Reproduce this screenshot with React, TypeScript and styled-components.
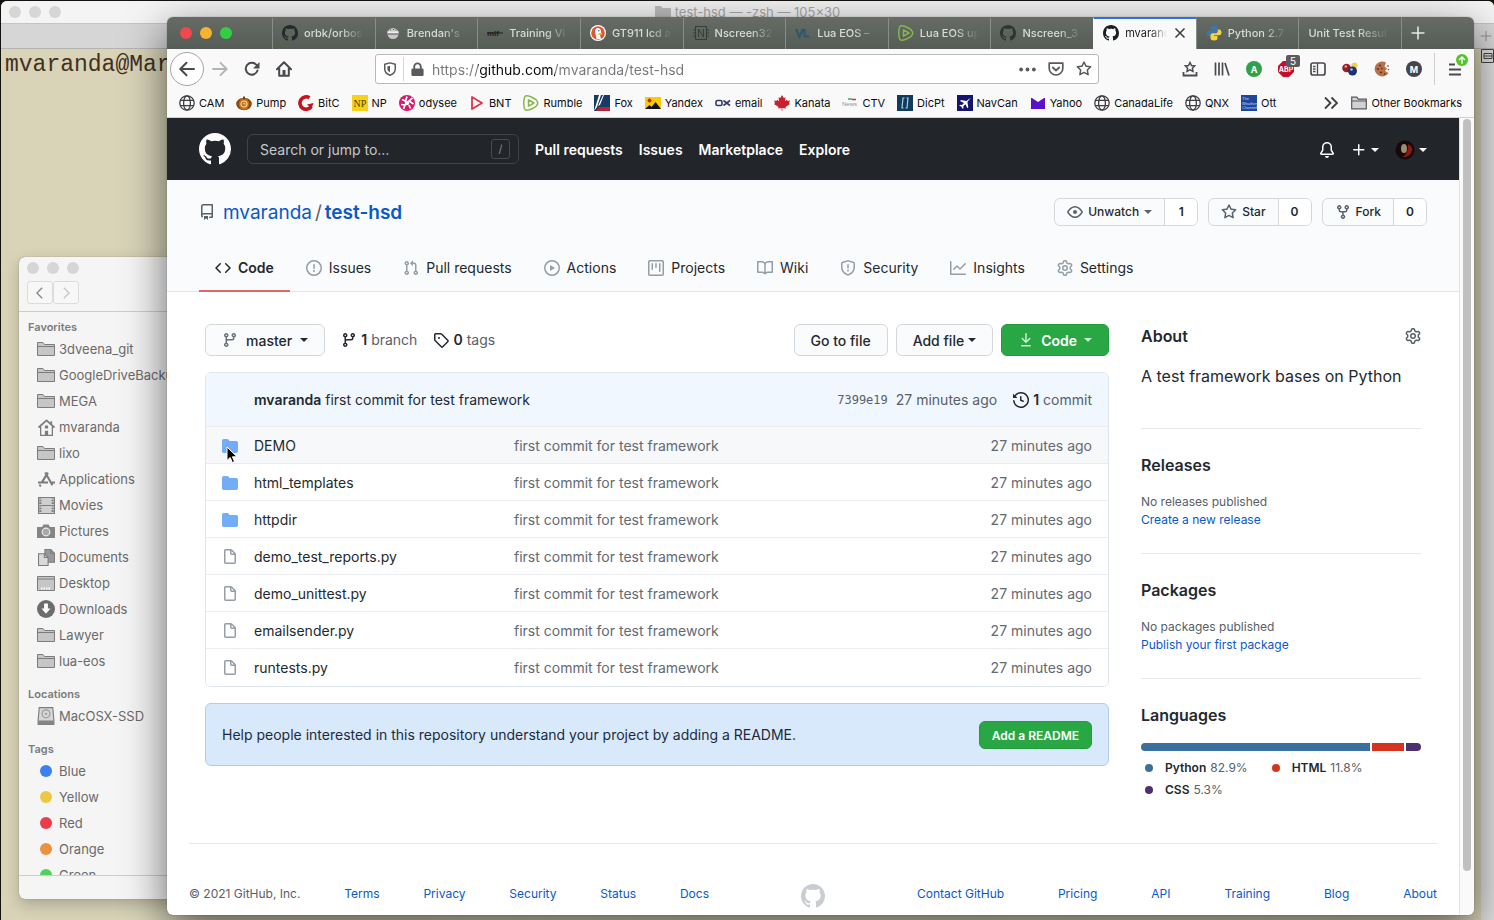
import React from "react";
import styled, { createGlobalStyle, css } from "styled-components";

const GlobalStyle = createGlobalStyle`
  *, *::before, *::after { box-sizing: border-box; }
  body {
    margin: 0;
    background: #14120e;
    font-family: Inter, "Liberation Sans", sans-serif;
    font-size: 14px;
    line-height: 20px;
    color: #24292e;
  }
  button, input { font-family: inherit; }
  button { cursor: pointer; }
  a { color: inherit; text-decoration: none; }
  h1, h2, p, ul { margin: 0; padding: 0; }
  ul { list-style: none; }
  svg { display: block; flex: none; }
`;

/* ---------- icon paths (16px grid) ---------- */

const paths = {
  mark: "M8 0C3.58 0 0 3.58 0 8c0 3.54 2.29 6.53 5.47 7.59.4.07.55-.17.55-.38 0-.19-.01-.82-.01-1.49-2.01.37-2.53-.49-2.69-.94-.09-.23-.48-.94-.82-1.13-.28-.15-.68-.52-.01-.53.63-.01 1.08.58 1.23.82.72 1.21 1.87.87 2.33.66.07-.52.28-.87.51-1.07-1.78-.2-3.64-.89-3.64-3.95 0-.87.31-1.59.82-2.15-.08-.2-.36-1.02.08-2.12 0 0 .67-.21 2.2.82.64-.18 1.32-.27 2-.27.68 0 1.36.09 2 .27 1.53-1.04 2.2-.82 2.2-.82.44 1.1.16 1.92.08 2.12.51.56.82 1.27.82 2.15 0 3.07-1.87 3.75-3.65 3.95.29.25.54.73.54 1.48 0 1.07-.01 1.93-.01 2.2 0 .21.15.46.55.38A8.013 8.013 0 0016 8c0-4.42-3.58-8-8-8z",
  repo: "M2 2.5A2.5 2.5 0 014.5 0h8.75a.75.75 0 01.75.75v12.5a.75.75 0 01-.75.75h-2.5a.75.75 0 110-1.5h1.75v-2h-8a1 1 0 00-.714 1.7.75.75 0 01-1.072 1.05A2.495 2.495 0 012 11.5v-9zm10.5-1V9h-8c-.356 0-.694.074-1 .208V2.5a1 1 0 011-1h8zM5 12.25v3.25a.25.25 0 00.4.2l1.45-1.087a.25.25 0 01.3 0L8.6 15.7a.25.25 0 00.4-.2v-3.25a.25.25 0 00-.25-.25h-3.5a.25.25 0 00-.25.25z",
  code: "M4.72 3.22a.75.75 0 011.06 1.06L2.06 8l3.72 3.72a.75.75 0 11-1.06 1.06L.47 8.53a.75.75 0 010-1.06l4.25-4.25zm6.56 0a.75.75 0 10-1.06 1.06L13.94 8l-3.72 3.72a.75.75 0 101.06 1.06l4.25-4.25a.75.75 0 000-1.06l-4.25-4.25z",
  issue: "M8 1.5a6.5 6.5 0 100 13 6.5 6.5 0 000-13zM0 8a8 8 0 1116 0A8 8 0 010 8zm9 3a1 1 0 11-2 0 1 1 0 012 0zm-.25-6.25a.75.75 0 00-1.5 0v3.5a.75.75 0 001.5 0v-3.5z",
  pull: "M7.177 3.073L9.573.677A.25.25 0 0110 .854v4.792a.25.25 0 01-.427.177L7.177 3.427a.25.25 0 010-.354zM3.75 2.5a.75.75 0 100 1.5.75.75 0 000-1.5zm-2.25.75a2.25 2.25 0 113 2.122v5.256a2.251 2.251 0 11-1.5 0V5.372A2.25 2.25 0 011.5 3.25zM11 2.5h-1V4h1a1 1 0 011 1v5.628a2.251 2.251 0 101.5 0V5A2.5 2.5 0 0011 2.5zm1 10.25a.75.75 0 111.5 0 .75.75 0 01-1.5 0zM3.75 12a.75.75 0 100 1.5.75.75 0 000-1.5z",
  play: "M1.5 8a6.5 6.5 0 1113 0 6.5 6.5 0 01-13 0zM8 0a8 8 0 100 16A8 8 0 008 0zM6.379 5.227A.25.25 0 006 5.442v5.117a.25.25 0 00.379.214l4.264-2.559a.25.25 0 000-.428L6.379 5.227z",
  project: "M1.75 0A1.75 1.75 0 000 1.75v12.5C0 15.216.784 16 1.75 16h12.5A1.75 1.75 0 0016 14.25V1.75A1.75 1.75 0 0014.25 0H1.75zM1.5 1.75a.25.25 0 01.25-.25h12.5a.25.25 0 01.25.25v12.5a.25.25 0 01-.25.25H1.75a.25.25 0 01-.25-.25V1.75zM11.75 3a.75.75 0 00-.75.75v7.5a.75.75 0 001.5 0v-7.5a.75.75 0 00-.75-.75zm-8.25.75a.75.75 0 011.5 0v5.5a.75.75 0 01-1.5 0v-5.5zM8 3a.75.75 0 00-.75.75v3.5a.75.75 0 001.5 0v-3.5A.75.75 0 008 3z",
  book: "M0 1.75A.75.75 0 01.75 1h4.253c1.227 0 2.317.59 3 1.501A3.744 3.744 0 0111.006 1h4.245a.75.75 0 01.75.75v10.5a.75.75 0 01-.75.75h-4.507a2.25 2.25 0 00-1.591.659l-.622.621a.75.75 0 01-1.06 0l-.622-.621A2.25 2.25 0 005.258 13H.75a.75.75 0 01-.75-.75V1.75zm8.755 3a2.25 2.25 0 012.25-2.25H14.5v9h-3.757c-.71 0-1.4.201-1.992.572l.004-7.322zm-1.504 7.324l.004-5.073-.002-2.253A2.25 2.25 0 005.003 2.5H1.5v9h3.757a3.75 3.75 0 011.994.574z",
  shield: "M7.467.133a1.75 1.75 0 011.066 0l5.25 1.68A1.75 1.75 0 0115 3.48V7c0 1.566-.32 3.182-1.303 4.682-.983 1.498-2.585 2.813-5.032 3.855a1.7 1.7 0 01-1.33 0c-2.447-1.042-4.049-2.357-5.032-3.855C1.32 10.182 1 8.566 1 7V3.48a1.75 1.75 0 011.217-1.667l5.25-1.68zm.61 1.429a.25.25 0 00-.153 0l-5.25 1.68a.25.25 0 00-.174.238V7c0 1.358.275 2.666 1.057 3.86.784 1.194 2.121 2.34 4.366 3.297a.2.2 0 00.154 0c2.245-.956 3.582-2.104 4.366-3.298C13.225 9.666 13.5 8.36 13.5 7V3.48a.25.25 0 00-.174-.237l-5.25-1.68zM9 10.5a1 1 0 11-2 0 1 1 0 012 0zm-.25-5.75a.75.75 0 10-1.5 0v3a.75.75 0 001.5 0v-3z",
  graph: "M1.5 1.75a.75.75 0 00-1.5 0v12.5c0 .414.336.75.75.75h14.5a.75.75 0 000-1.5H1.5V1.75zm14.28 2.53a.75.75 0 00-1.06-1.06L10 7.94 7.53 5.47a.75.75 0 00-1.06 0L3.22 8.72a.75.75 0 001.06 1.06L7 7.06l2.47 2.47a.75.75 0 001.06 0l5.25-5.25z",
  gear: "M7.429 1.525a6.593 6.593 0 011.142 0c.036.003.108.036.137.146l.289 1.105c.147.56.55.967.997 1.189.174.086.341.183.501.29.417.278.97.423 1.53.27l1.102-.303c.11-.03.175.016.195.046.219.31.41.641.573.989.014.031.022.11-.059.19l-.815.806c-.411.406-.562.957-.53 1.456a4.588 4.588 0 010 .582c-.032.499.119 1.05.53 1.456l.815.806c.08.08.073.159.059.19a6.494 6.494 0 01-.573.99c-.02.029-.086.074-.195.045l-1.103-.303c-.559-.153-1.112-.008-1.529.27-.16.107-.327.204-.5.29-.449.222-.851.628-.998 1.189l-.289 1.105c-.029.11-.101.143-.137.146a6.613 6.613 0 01-1.142 0c-.036-.003-.108-.037-.137-.146l-.289-1.105c-.147-.56-.55-.967-.997-1.189a4.502 4.502 0 01-.501-.29c-.417-.278-.97-.423-1.53-.27l-1.102.303c-.11.03-.175-.016-.195-.046a6.492 6.492 0 01-.573-.989c-.014-.031-.022-.11.059-.19l.815-.806c.411-.406.562-.957.53-1.456a4.587 4.587 0 010-.582c.032-.499-.119-1.05-.53-1.456l-.815-.806c-.08-.08-.073-.159-.059-.19a6.44 6.44 0 01.573-.99c.02-.029.086-.075.195-.045l1.103.303c.559.153 1.112.008 1.529-.27.16-.107.327-.204.5-.29.449-.222.851-.628.998-1.189l.289-1.105c.029-.11.101-.143.137-.146zM8 0c-.236 0-.47.01-.701.03-.743.065-1.29.615-1.458 1.261l-.29 1.106c-.017.066-.078.158-.211.224a5.994 5.994 0 00-.668.386c-.123.082-.233.09-.3.071L3.27 2.776c-.644-.177-1.392.02-1.82.63a7.977 7.977 0 00-.704 1.217c-.315.675-.111 1.422.363 1.891l.815.806c.05.048.098.147.088.294a6.084 6.084 0 000 .772c.01.147-.038.246-.088.294l-.815.806c-.474.469-.678 1.216-.363 1.891.2.428.436.835.704 1.218.428.609 1.176.806 1.82.63l1.103-.303c.066-.019.176-.011.299.071.213.143.436.272.668.386.133.066.194.158.212.224l.289 1.106c.169.646.715 1.196 1.458 1.26a8.094 8.094 0 001.402 0c.743-.064 1.29-.614 1.458-1.26l.29-1.106c.017-.066.078-.158.211-.224a5.98 5.98 0 00.668-.386c.123-.082.233-.09.3-.071l1.102.302c.644.177 1.392-.02 1.82-.63.268-.382.505-.789.704-1.217.315-.675.111-1.422-.364-1.891l-.814-.806c-.05-.048-.098-.147-.088-.294a6.1 6.1 0 000-.772c-.01-.147.039-.246.088-.294l.814-.806c.475-.469.679-1.216.364-1.891a7.992 7.992 0 00-.704-1.218c-.428-.609-1.176-.806-1.82-.63l-1.103.303c-.066.019-.176.011-.299-.071a5.991 5.991 0 00-.668-.386c-.133-.066-.194-.158-.212-.224L10.16 1.29C9.99.645 9.444.095 8.701.031A8.094 8.094 0 008 0zm1.5 8a1.5 1.5 0 11-3 0 1.5 1.5 0 013 0zM11 8a3 3 0 11-6 0 3 3 0 016 0z",
  eye: "M1.679 7.932c.412-.621 1.242-1.75 2.366-2.717C5.175 4.242 6.527 3.5 8 3.5c1.473 0 2.824.742 3.955 1.715 1.124.967 1.954 2.096 2.366 2.717a.119.119 0 010 .136c-.412.621-1.242 1.75-2.366 2.717C10.825 11.758 9.473 12.5 8 12.5c-1.473 0-2.824-.742-3.955-1.715C2.92 9.818 2.09 8.69 1.679 8.068a.119.119 0 010-.136zM8 2c-1.981 0-3.67.992-4.933 2.078C1.797 5.169.88 6.423.43 7.1a1.619 1.619 0 000 1.798c.45.678 1.367 1.932 2.637 3.024C4.329 13.008 6.019 14 8 14c1.981 0 3.67-.992 4.933-2.078 1.27-1.091 2.187-2.345 2.637-3.023a1.619 1.619 0 000-1.798c-.45-.678-1.367-1.932-2.637-3.023C11.671 2.992 9.981 2 8 2zm0 8a2 2 0 100-4 2 2 0 000 4z",
  star: "M8 .25a.75.75 0 01.673.418l1.882 3.815 4.21.612a.75.75 0 01.416 1.279l-3.046 2.97.719 4.192a.75.75 0 01-1.088.791L8 12.347l-3.766 1.98a.75.75 0 01-1.088-.79l.72-4.194L.818 6.374a.75.75 0 01.416-1.28l4.21-.611L7.327.668A.75.75 0 018 .25zm0 2.445L6.615 5.5a.75.75 0 01-.564.41l-3.097.45 2.24 2.184a.75.75 0 01.216.664l-.528 3.084 2.769-1.456a.75.75 0 01.698 0l2.77 1.456-.53-3.084a.75.75 0 01.216-.664l2.24-2.183-3.096-.45a.75.75 0 01-.564-.41L8 2.694v.001z",
  fork: "M5 3.25a.75.75 0 11-1.5 0 .75.75 0 011.5 0zm0 2.122a2.25 2.25 0 10-1.5 0v.878A2.25 2.25 0 005.75 8.5h1.5v2.128a2.251 2.251 0 101.5 0V8.5h1.5a2.25 2.25 0 002.25-2.25v-.878a2.25 2.25 0 10-1.5 0v.878a.75.75 0 01-.75.75h-4.5A.75.75 0 015 6.25v-.878zm3.75 7.378a.75.75 0 11-1.5 0 .75.75 0 011.5 0zm3-8.75a.75.75 0 100-1.5.75.75 0 000 1.5z",
  branch: "M11.75 2.5a.75.75 0 100 1.5.75.75 0 000-1.5zm-2.25.75a2.25 2.25 0 113 2.122V6A2.5 2.5 0 0110 8.5H6a1 1 0 00-1 1v1.128a2.251 2.251 0 11-1.5 0V5.372a2.25 2.25 0 111.5 0v1.836A2.492 2.492 0 016 7h4a1 1 0 001-1v-.628A2.25 2.25 0 019.5 3.25zM4.25 12a.75.75 0 100 1.5.75.75 0 000-1.5zM3.5 3.25a.75.75 0 111.5 0 .75.75 0 01-1.5 0z",
  tag: "M2.5 7.775V2.75a.25.25 0 01.25-.25h5.025a.25.25 0 01.177.073l6.25 6.25a.25.25 0 010 .354l-5.025 5.025a.25.25 0 01-.354 0l-6.25-6.25a.25.25 0 01-.073-.177zm-1.5 0V2.75C1 1.784 1.784 1 2.75 1h5.025c.464 0 .91.184 1.238.513l6.25 6.25a1.75 1.75 0 010 2.474l-5.026 5.026a1.75 1.75 0 01-2.474 0l-6.25-6.25A1.75 1.75 0 011 7.775zM6 5a1 1 0 100 2 1 1 0 000-2z",
  history: "M1.643 3.143L.427 1.927A.25.25 0 000 2.104V5.75c0 .138.112.25.25.25h3.646a.25.25 0 00.177-.427L2.715 4.215a6.5 6.5 0 11-1.18 4.458.75.75 0 10-1.493.154 8.001 8.001 0 101.6-5.684zM7.75 4a.75.75 0 01.75.75v2.992l2.028.812a.75.75 0 01-.557 1.392l-2.5-1A.75.75 0 017 8.25v-3.5A.75.75 0 017.75 4z",
  download: "M7.47 10.78a.75.75 0 001.06 0l3.75-3.75a.75.75 0 00-1.06-1.06L8.75 8.44V1.75a.75.75 0 00-1.5 0v6.69L4.78 5.97a.75.75 0 00-1.06 1.06l3.75 3.75zM3.75 13a.75.75 0 000 1.5h8.5a.75.75 0 000-1.5h-8.5z",
  directory: "M1.75 1A1.75 1.75 0 000 2.75v10.5C0 14.216.784 15 1.75 15h12.5A1.75 1.75 0 0016 13.25v-8.5A1.75 1.75 0 0014.25 3h-6.5a.25.25 0 01-.2-.1l-.9-1.2c-.33-.44-.85-.7-1.4-.7h-3.5z",
  file: "M3.75 1.5a.25.25 0 00-.25.25v11.5c0 .138.112.25.25.25h8.5a.25.25 0 00.25-.25V6H9.75A1.75 1.75 0 018 4.25V1.5H3.75zm5.75.56v2.19c0 .138.112.25.25.25h2.19L9.5 2.06zM2 1.75C2 .784 2.784 0 3.75 0h5.086c.464 0 .909.184 1.237.513l3.414 3.414c.329.328.513.773.513 1.237v8.086A1.75 1.75 0 0112.25 15h-8.5A1.75 1.75 0 012 13.25V1.75z",
  bell: "M8 16a2 2 0 001.985-1.75c.017-.137-.097-.25-.235-.25h-3.5c-.138 0-.252.113-.235.25A2 2 0 008 16zM8 1.5A3.5 3.5 0 004.5 5v2.947c0 .346-.102.683-.294.97l-1.703 2.556a.018.018 0 00-.003.01l.001.006c0 .002.002.004.004.006a.017.017 0 00.006.004l.007.001h10.964l.007-.001a.016.016 0 00.006-.004.016.016 0 00.004-.006l.001-.007a.017.017 0 00-.003-.01l-1.703-2.554a1.75 1.75 0 01-.294-.97V5A3.5 3.5 0 008 1.5zM3 5a5 5 0 0110 0v2.947c0 .05.015.098.042.139l1.703 2.555A1.518 1.518 0 0113.482 13H2.518a1.518 1.518 0 01-1.263-2.36l1.703-2.554A.25.25 0 003 7.947V5z",
  plus: "M7.75 2a.75.75 0 01.75.75V7h4.25a.75.75 0 110 1.5H8.5v4.25a.75.75 0 11-1.5 0V8.5H2.75a.75.75 0 010-1.5H7V2.75A.75.75 0 017.75 2z",
};

type IconName = keyof typeof paths;

const Icon = ({ name, size = 16, color = "currentColor" }: { name: IconName; size?: number; color?: string }) => (
  <svg width={size} height={size} viewBox="0 0 16 16" fill={color} aria-hidden="true">
    <path fillRule="evenodd" d={paths[name]} />
  </svg>
);

const Svg = ({ size = 16, children }: { size?: number; children: React.ReactNode }) => (
  <svg width={size} height={size} viewBox="0 0 16 16" fill="none" aria-hidden="true">
    {children}
  </svg>
);

/* ---------- desktop and windows ---------- */

const Desktop = styled.div`
  position: relative;
  height: 100vh;
  min-height: 600px;
  overflow: hidden;
`;

const TerminalWindow = styled.section`
  position: absolute;
  inset: 1px 0 0 1px;
  display: flex;
  flex-direction: column;
  overflow: hidden;
  border-radius: 6px 6px 0 0;
  background: #d9d4b8;
`;

const TerminalTitle = styled.header`
  display: flex;
  align-items: center;
  height: 23px;
  padding: 0 60px 0 8px;
  background: #f4f4f4;
  border-bottom: 1px solid #c4c4c4;
`;

const TerminalName = styled.span`
  flex: 1;
  display: flex;
  justify-content: center;
  gap: 4px;
  font-size: 13px;
  color: #a9a9a9;
`;

const Dots = styled.div`
  display: flex;
  gap: 8px;
`;

const Dot = styled.span<{ $color: string }>`
  width: 12px;
  height: 12px;
  border-radius: 50%;
  background: ${(p) => p.$color};
`;

const TerminalTabs = styled.div`
  display: flex;
  align-items: center;
  justify-content: flex-end;
  height: 25px;
  padding-right: 2px;
  color: #8c8c8c;
  background: #d6d6d6;
  border-bottom: 1px solid #b4b4b4;
`;

const TerminalBody = styled.div`
  flex: 1;
  display: flex;
  justify-content: space-between;
`;

const Prompt = styled.pre`
  margin: 0;
  padding: 3px 4px;
  font-family: "Liberation Mono", monospace;
  font-size: 23px;
  line-height: 26px;
  color: #43301f;
`;

const TerminalScroll = styled.div`
  width: 13px;
  background: #e0e0e0;
  color: #444444;
`;

const FinderWindow = styled.section`
  position: absolute;
  left: 19px;
  top: 257px;
  bottom: 21px;
  width: 420px;
  display: flex;
  flex-direction: column;
  overflow: hidden;
  border-radius: 6px;
  background: #f5f5f5;
  box-shadow: 0 0 1px rgba(0, 0, 0, 0.5), 0 6px 16px rgba(0, 0, 0, 0.22);
`;

const FinderBar = styled.header`
  display: flex;
  flex-direction: column;
  gap: 7px;
  height: 55px;
  padding: 5px 8px;
  border-bottom: 1px solid #cdcdcd;
`;

const FinderNav = styled.div`
  display: flex;
`;

const FinderNavButton = styled.button<{ $dim?: boolean }>`
  display: grid;
  place-items: center;
  width: 26px;
  height: 23px;
  padding: 0;
  border: 1px solid #dcdcdc;
  border-radius: 3px;
  background: #f7f7f7;
  color: ${(p) => (p.$dim ? "#c6c6c6" : "#8a8a8a")};
`;

const FinderSidebar = styled.nav`
  flex: 1;
  min-height: 0;
  overflow: hidden;
  display: flex;
  flex-direction: column;
  gap: 11px;
  padding: 6px 9px 0;
`;

const FinderHeading = styled.h2`
  font-size: 11px;
  line-height: 18px;
  font-weight: 600;
  color: #7b7b7b;
`;

const FinderItem = styled.li`
  display: flex;
  align-items: center;
  gap: 4px;
  height: 26px;
  padding-left: 9px;
  font-size: 13px;
  color: #6a6a6a;
  white-space: nowrap;
`;

const FinderIcon = styled.span`
  display: grid;
  place-items: center;
  width: 18px;
  color: #7c7c7c;
`;

const FinderStatus = styled.footer`
  height: 24px;
  border-top: 1px solid #cdcdcd;
`;

const BrowserWindow = styled.section`
  position: absolute;
  inset: 17px 20px 5px 167px;
  display: flex;
  flex-direction: column;
  overflow: hidden;
  border-radius: 6px;
  background: #ffffff;
  box-shadow: 0 0 1px rgba(0, 0, 0, 0.6), 0 14px 44px rgba(0, 0, 0, 0.6);
`;

/* ---------- browser chrome ---------- */

const TabStrip = styled.header`
  display: flex;
  height: 32px;
  background: linear-gradient(#666b66, #555b55);
`;

const WindowControls = styled.div`
  display: flex;
  align-items: center;
  gap: 8px;
  width: 105px;
  padding-left: 13px;
`;

const Tab = styled.button<{ $active?: boolean }>`
  flex: 1;
  min-width: 0;
  display: flex;
  align-items: center;
  gap: 6px;
  padding: 0 10px 2px 9px;
  border: 0;
  border-left: 1px solid #8a8e8a;
  border-top: 2px solid transparent;
  background: none;
  color: #d9dbd9;
  font-size: 11px;
  font-weight: 500;
  ${(p) =>
    p.$active &&
    css`
      background: #f9f9fa;
      border-color: #2f6fe0 transparent transparent;
      color: #1c1c1d;
      font-weight: 400;
    `}
`;

const TabTitle = styled.span`
  flex: 1;
  min-width: 0;
  overflow: hidden;
  white-space: nowrap;
  text-align: left;
  mask-image: linear-gradient(to right, #000 60%, transparent 98%);
`;

const NewTab = styled.button`
  width: 73px;
  padding: 0 0 0 8px;
  border: 0;
  border-left: 1px solid #8a8e8a;
  background: none;
  color: #e6e8e6;
`;

const Toolbar = styled.div`
  display: flex;
  align-items: center;
  height: 40px;
  padding: 0 3px;
  background: #f9f9fa;
  color: #4a4a4f;
`;

const ToolButton = styled.button<{ $round?: boolean }>`
  position: relative;
  display: grid;
  place-items: center;
  width: 32px;
  height: 32px;
  padding: 0;
  border: 0;
  background: none;
  color: inherit;
  ${(p) =>
    p.$round &&
    css`
      width: 34px;
      height: 34px;
      border: 1px solid #a5a5a8;
      border-radius: 50%;
      background: #ffffff;
    `}
`;

const Badge = styled.span`
  position: absolute;
  top: 2px;
  right: 2px;
  padding: 0 4px;
  border-radius: 2px;
  background: #5b5b5f;
  color: #ffffff;
  font-size: 10px;
  line-height: 12px;
`;

const UpdateBadge = styled.span`
  position: absolute;
  top: 1px;
  right: 3px;
`;

const AddressBar = styled.div`
  flex: 1;
  display: flex;
  align-items: center;
  height: 30px;
  margin: 0 75px;
  border: 1px solid #b8b8bb;
  border-radius: 3px;
  background: #ffffff;
`;

const AddressSlot = styled.button<{ $divided?: boolean }>`
  display: grid;
  place-items: center;
  width: 28px;
  height: 24px;
  padding: 0;
  border: 0;
  border-right: 1px solid ${(p) => (p.$divided ? "#d7d7db" : "transparent")};
  background: none;
  color: #5a5a5e;
`;

const AddressInput = styled.input`
  flex: 1;
  min-width: 0;
  padding: 1px 0 0;
  border: 0;
  outline: 0;
  font-size: 14px;
  line-height: 20px;
  color: transparent;
  background: linear-gradient(to right, #77777b 46px, #0c0c0d 46px, #0c0c0d 123px, #77777b 123px);
  background-clip: text;
  -webkit-background-clip: text;
`;

const Divider = styled.span`
  width: 1px;
  height: 32px;
  margin: 0 4px;
  background: #cfcfd2;
`;

const BookmarkBar = styled.nav`
  display: flex;
  align-items: center;
  gap: 47px;
  height: 29px;
  padding: 0 12px;
  background: #f9f9fa;
  border-bottom: 1px solid #d0d0d2;
  font-size: 11px;
  color: #0c0c0d;
`;

const BookmarkList = styled.ul`
  flex: 1;
  display: flex;
  justify-content: space-between;
`;

const Bookmark = styled.a`
  display: flex;
  align-items: center;
  gap: 4px;
  white-space: nowrap;
`;

const BookmarkTail = styled.div`
  display: flex;
  align-items: center;
  gap: 12px;
`;

/* ---------- page frame ---------- */

const Viewport = styled.div`
  flex: 1;
  min-height: 0;
  display: flex;
`;

const Page = styled.div`
  flex: 1;
  min-width: 0;
  overflow: hidden;
`;

const ScrollTrack = styled.div`
  width: 15px;
  padding: 1px 3px 44px;
  background: #fafafa;
  border-left: 1px solid #e4e4e4;
`;

const ScrollThumb = styled.div`
  width: 8px;
  height: 100%;
  border-radius: 4px;
  background: #c0c0c0;
`;

const SiteHeader = styled.header`
  display: flex;
  align-items: center;
  gap: 16px;
  height: 62px;
  padding: 0 32px;
  background: #222529;
  color: #ffffff;
`;

const SearchBox = styled.label`
  display: flex;
  align-items: center;
  width: 272px;
  height: 30px;
  padding: 0 8px 0 12px;
  border: 1px solid #3f4449;
  border-radius: 6px;
`;

const SearchInput = styled.input`
  flex: 1;
  min-width: 0;
  padding: 0;
  border: 0;
  outline: 0;
  background: none;
  color: #ffffff;
  font-size: 14px;
  &::placeholder { color: #c6c9cc; opacity: 1; }
`;

const SlashKey = styled.kbd`
  width: 19px;
  height: 20px;
  border: 1px solid #464b50;
  border-radius: 3px;
  color: #868c92;
  font: 11px/18px Inter, sans-serif;
  text-align: center;
`;

const SiteNav = styled.nav`
  display: flex;
  gap: 16px;
  padding-top: 2px;
  font-weight: 600;
`;

const HeaderActions = styled.div`
  margin-left: auto;
  display: flex;
  align-items: center;
  gap: 16px;
  padding-top: 2px;
`;

const HeaderButton = styled.button`
  display: flex;
  align-items: center;
  gap: 4px;
  padding: 0;
  border: 0;
  background: none;
  color: inherit;
`;

const Caret = styled.span`
  border: 4px solid transparent;
  border-top-color: currentColor;
  border-bottom: 0;
`;

const RepoHead = styled.div`
  padding: 18px 32px 0;
  background: #fafbfc;
  border-bottom: 1px solid #e1e4e8;
`;

const RepoTop = styled.div`
  display: flex;
  justify-content: space-between;
  align-items: center;
  height: 28px;
`;

const RepoTitle = styled.h1`
  display: flex;
  align-items: center;
  gap: 8px;
  font-size: 19px;
  line-height: 28px;
  font-weight: 400;
  color: #586069;
`;

const RepoPath = styled.span`
  display: flex;
  gap: 3px;
  padding-top: 2px;
`;

const RepoLink = styled.a<{ $strong?: boolean }>`
  color: #0a58ca;
  font-weight: ${(p) => (p.$strong ? 600 : 400)};
`;

const RepoActions = styled.div`
  display: flex;
  gap: 10px;
`;

const SplitButton = styled.div`
  display: flex;
  height: 28px;
  border: 1px solid #d5d8db;
  border-radius: 6px;
  overflow: hidden;
  background: #fafbfc;
  font-size: 12px;
  font-weight: 500;
`;

const SplitMain = styled.button`
  display: flex;
  align-items: center;
  gap: 5px;
  padding: 0 12px;
  border: 0;
  border-right: 1px solid #d5d8db;
  background: none;
  font: inherit;
  color: #24292e;
  svg, span { color: #5b646d; }
`;

const SplitCount = styled.a`
  display: grid;
  place-items: center;
  min-width: 32px;
  background: #ffffff;
  font-weight: 600;
`;

const RepoTabs = styled.nav`
  display: flex;
  margin-top: 18px;
`;

const RepoTab = styled.a<{ $active?: boolean }>`
  display: flex;
  align-items: center;
  gap: 7px;
  height: 48px;
  padding: 1px 16px 0;
  margin-bottom: -1px;
  border-bottom: 2px solid ${(p) => (p.$active ? "#e36663" : "transparent")};
  font-weight: ${(p) => (p.$active ? 600 : 400)};
  white-space: nowrap;
  svg { color: ${(p) => (p.$active ? "#24292e" : "#959da5")}; }
`;

const Columns = styled.div`
  display: grid;
  grid-template-columns: minmax(0, 1fr) 280px;
  gap: 32px;
  max-width: 1280px;
  margin: 0 auto;
  padding: 32px 32px 0;
`;

const MainColumn = styled.main`
  display: flex;
  flex-direction: column;
  gap: 16px;
`;

const FileBar = styled.div`
  display: flex;
  align-items: center;
  gap: 8px;
`;

const Button = styled.button<{ $primary?: boolean; $small?: boolean; $tight?: boolean }>`
  display: flex;
  align-items: center;
  gap: ${(p) => (p.$tight ? 4 : p.$primary ? 7 : 8)}px;
  height: ${(p) => (p.$small ? 28 : 32)}px;
  padding: 0 ${(p) => (p.$small ? 12 : 16)}px;
  border: 1px solid #d5d8db;
  border-radius: 6px;
  background: #fafbfc;
  color: #24292e;
  font-size: ${(p) => (p.$small ? 12 : 14)}px;
  font-weight: 500;
  white-space: nowrap;
  ${(p) =>
    p.$primary &&
    css`
      background: #2aa745;
      border-color: #279a41;
      color: #ffffff;
      font-weight: 600;
      svg, span { color: #c9f0d2; }
    `}
`;

const Counts = styled.div`
  flex: 1;
  display: flex;
  gap: 16px;
  margin-left: 8px;
`;

const CountLink = styled.a`
  display: flex;
  align-items: center;
  gap: 4px;
  color: #586069;
  svg, strong { color: #24292e; }
  strong { font-weight: 600; }
`;

const FileBox = styled.section`
  border: 1px solid #dfe5ec;
  border-radius: 6px;
  overflow: hidden;
`;

const CommitBar = styled.div`
  display: flex;
  align-items: center;
  gap: 8px;
  height: 53px;
  padding: 0 16px 0 48px;
  background: #f0f7ff;
  color: #586069;
`;

const CommitMessage = styled.p`
  flex: 1;
  color: #1f2a36;
  strong { font-weight: 600; }
`;

const CommitTime = styled.span`
  margin-right: 8px;
`;

const Sha = styled.a`
  font-family: "DejaVu Sans Mono", monospace;
  font-size: 12px;
`;

const FileTable = styled.table`
  width: 100%;
  table-layout: fixed;
  border-collapse: collapse;
`;

const FileRow = styled.tr<{ $hover?: boolean }>`
  height: 37px;
  border-top: 1px solid #eaecef;
  background: ${(p) => (p.$hover ? "#f6f8fa" : "#ffffff")};
`;

const FileCell = styled.td<{ $kind: "icon" | "name" | "message" | "time" }>`
  position: relative;
  width: ${(p) => ({ icon: "48px", name: "260px", message: "auto", time: "150px" })[p.$kind]};
  padding: ${(p) => ({ icon: "2px 16px 0", name: "2px 0 0", message: "2px 0 0", time: "2px 16px 0 0" })[p.$kind]};
  text-align: ${(p) => (p.$kind === "time" ? "right" : "left")};
  color: ${(p) => (p.$kind === "name" ? "#24292e" : "#626a72")};
`;

const Pointer = styled.span`
  position: absolute;
  left: 20px;
  top: 19px;
`;

const ReadmeNotice = styled.section`
  display: flex;
  align-items: center;
  justify-content: space-between;
  height: 63px;
  padding: 2px 16px 0;
  border: 1px solid #b0cdec;
  border-radius: 6px;
  background: #d9e9fc;
  color: #1b2b3d;
`;

const Aside = styled.aside`
  display: flex;
  flex-direction: column;
`;

const AsideBlock = styled.section<{ $last?: boolean }>`
  padding-bottom: 24px;
  margin-bottom: ${(p) => (p.$last ? 20 : 24)}px;
  border-bottom: ${(p) => (p.$last ? 0 : "1px solid #e6e8eb")};
  font-size: 12px;
  line-height: 18px;
  color: #586069;
`;

const AsideHeading = styled.h2`
  display: flex;
  align-items: center;
  justify-content: space-between;
  margin-bottom: 16px;
  font-size: 16px;
  line-height: 24px;
  font-weight: 600;
  color: #24292e;
`;

const About = styled.p`
  margin-bottom: 16px;
  font-size: 16px;
  line-height: 24px;
  color: #24292e;
`;

const AsideLink = styled.a`
  display: block;
  color: #0a58ca;
`;

const LanguageBar = styled.div`
  display: flex;
  gap: 2px;
  height: 8px;
  margin-bottom: 8px;
  border-radius: 6px;
  overflow: hidden;
`;

const LanguageShare = styled.span<{ $color: string }>`
  background: ${(p) => p.$color};
`;

const LanguageList = styled.ul`
  display: flex;
  flex-wrap: wrap;
  column-gap: 20px;
  row-gap: 4px;
`;

const Language = styled.li<{ $color: string }>`
  display: flex;
  align-items: center;
  gap: 4px;
  &::before {
    content: "";
    width: 8px;
    height: 8px;
    margin: 0 8px 0 4px;
    border-radius: 50%;
    background: ${(p) => p.$color};
  }
  strong { font-weight: 600; color: #24292e; }
`;

const SiteFooter = styled.footer`
  display: grid;
  grid-template-columns: minmax(0, 1fr) 24px minmax(0, 1fr);
  align-items: start;
  gap: 92px;
  margin: 0 22px;
  padding: 40px 0;
  border-top: 1px solid #e6e8eb;
  font-size: 12px;
  color: #586069;
`;

const FooterList = styled.ul`
  display: flex;
  justify-content: space-between;
  white-space: nowrap;
`;

const FooterLink = styled.a`
  color: #0a58ca;
`;

/* ---------- small drawings ---------- */

const Globe = () => (
  <Svg>
    <g stroke="#3f3f43" strokeWidth="1.3">
      <circle cx="8" cy="8" r="7.2" />
      <ellipse cx="8" cy="8" rx="3.4" ry="7.2" />
      <path d="M1.6 5.4h12.8M1.6 10.6h12.8" />
    </g>
  </Svg>
);

const Rumble = () => (
  <Svg>
    <path d="M3 .8Q.8 1.500.8 8T3 15.200Q7 15.500 13 11.300 16.500 8 13 4.700 7 .5 3 .8Z" stroke="#85b84a" strokeWidth="1.500" />
    <path d="M5.500 4.800v6.400L11 8Z" stroke="#85b84a" strokeWidth="1.500" strokeLinejoin="round" />
  </Svg>
);

const bookmarks: { label: string; icon: React.ReactNode }[] = [
  { label: "CAM", icon: <Globe /> },
  {
    label: "Pump",
    icon: (
      <Svg>
        <ellipse cx="8" cy="9" rx="7.8" ry="6.200" fill="#8a4a12" />
        <ellipse cx="8" cy="9" rx="5" ry="6" fill="#c46e1c" />
        <path d="M7 1.500h2v3H7z" fill="#5c4a1c" />
        <circle cx="8" cy="9" r="3" stroke="#ffd98a" strokeWidth="1.200" />
        <path d="M8 7.500V9h1.500" stroke="#ffd98a" />
      </Svg>
    ),
  },
  {
    label: "BitC",
    icon: (
      <Svg>
        <path d="M11.500 2.800A6.200 6.200 0 1 0 13.300 11.500" stroke="#c9101d" strokeWidth="3.600" />
        <path d="m9 9.500 6.500-1.500-2 5.500Z" fill="#c9101d" />
      </Svg>
    ),
  },
  {
    label: "NP",
    icon: (
      <Svg>
        <path d="M0 0h16v16H0z" fill="#f7d117" />
        <text x="8" y="12" textAnchor="middle" fontFamily="Liberation Serif" fontSize="10" fill="#4d4010">NP</text>
      </Svg>
    ),
  },
  {
    label: "odysee",
    icon: (
      <Svg>
        <circle cx="8" cy="8" r="8" fill="#d6176a" />
        <path d="M3 4.500 6.500 6 8 1.500M13.500 3 10 6l4.500 3M2 9.500l4 .5-1.500 4M11.500 13.500 10 10" stroke="#fff" strokeWidth="1.700" />
        <circle cx="8" cy="8" r="2.300" fill="#fff" />
      </Svg>
    ),
  },
  {
    label: "BNT",
    icon: (
      <Svg>
        <path d="M3 2v12l10-6Z" stroke="#e0344b" strokeWidth="1.800" strokeLinejoin="round" />
      </Svg>
    ),
  },
  { label: "Rumble", icon: <Rumble /> },
  {
    label: "Fox",
    icon: (
      <Svg>
        <path d="M0 0h16v16H0z" fill="#173a66" />
        <path d="M0 16 5 0h2L3 12ZM4 11 9 0h1L6 10Z" fill="#fff" />
        <path d="M2 16l3-4h11v4Z" fill="#b3263a" />
      </Svg>
    ),
  },
  {
    label: "Yandex",
    icon: (
      <Svg>
        <path d="M0 2h16v12H0z" fill="#fdcb05" />
        <circle cx="4.500" cy="5.500" r="2" fill="#c9301c" />
        <path d="m0 14 4.500-4 2 2 4-5L16 14Z" fill="#141414" />
      </Svg>
    ),
  },
  {
    label: "email",
    icon: (
      <Svg>
        <g stroke="#343a6b" strokeWidth="1.600">
          <rect x="1" y="5.500" width="6" height="5" rx="1.500" />
          <path d="m8.500 5.500 6.500 5M15 5.500l-6.500 5" />
        </g>
      </Svg>
    ),
  },
  {
    label: "Kanata",
    icon: (
      <Svg>
        <path d="m8 0 1.800 3 1.700-.7-.6 4 2-1.500.7 1.200 2.400-.4-1 2.600 1 .8-4.500 3 .3 1.500-3.400-.5L8.300 16h-.6l-.1-3-3.400.5.300-1.500L0 9l1-.8-1-2.600 2.400.4.700-1.200 2 1.500-.6-4 1.700.7Z" fill="#c8202c" />
      </Svg>
    ),
  },
  {
    label: "CTV",
    icon: (
      <Svg>
        <text x="0" y="11" fontFamily="Liberation Sans" fontSize="6" fill="#8a929c">News</text>
        <path d="M6 4h4" stroke="#3fa66b" strokeWidth="1.600" />
        <path d="M10 4.500h4" stroke="#d2362f" strokeWidth="1.600" />
      </Svg>
    ),
  },
  {
    label: "DicPt",
    icon: (
      <Svg>
        <path d="M0 0h16v16H0z" fill="#123a5c" />
        <path d="M7.500 3H6L5 13h1.500M8.500 13H10l1-10H9.500" stroke="#a9d3e8" strokeWidth="1.200" />
      </Svg>
    ),
  },
  {
    label: "NavCan",
    icon: (
      <Svg>
        <path d="M0 0h16v16H0z" fill="#14146e" />
        <path d="M14 2.500 9.500 6 4 5l-1 1 4 2-2 2-2-.2-.8.800 2.300 1.200 1.200 2.200.8-.8-.2-1.900L8.500 9.300l1.800 4 1-1L10.400 7Z" fill="#fff" />
      </Svg>
    ),
  },
  {
    label: "Yahoo",
    icon: (
      <Svg>
        <path d="M1 3h14v11H1z" fill="#5a12c8" />
        <path d="m2 3 6 4 6-4Z" fill="#fff" />
      </Svg>
    ),
  },
  { label: "CanadaLife", icon: <Globe /> },
  { label: "QNX", icon: <Globe /> },
  {
    label: "Ott",
    icon: (
      <Svg>
        <path d="M0 0h16v16H0z" fill="#1d479c" />
        <g fontFamily="Liberation Sans" fontSize="4" fill="#c9d8f5">
          <text x="1" y="5">The</text>
          <text x="1" y="9.500">Weather</text>
          <text x="1" y="14">Channel</text>
        </g>
      </Svg>
    ),
  },
];

const tabs: { title: string; icon?: React.ReactNode; active?: boolean }[] = [
  { title: "orbk/orbos", icon: <Icon name="mark" color="#24292e" /> },
  {
    title: "Brendan's",
    icon: (
      <Svg>
        <circle cx="8" cy="8.500" r="5.500" fill="#c9c9c9" />
        <path d="M2 6.500h12l-1 2H3Z" fill="#efefef" />
        <path d="M3 9h10M5 5h1M8 4.500h1M10.500 5h1" stroke="#555" />
      </Svg>
    ),
  },
  {
    title: "Training Vi",
    icon: (
      <Svg>
        <text x="0" y="11" fontFamily="Liberation Sans" fontWeight="700" fontSize="8" fill="#1d201d">mlf</text>
        <path d="M0 8h16" stroke="#1d201d" />
      </Svg>
    ),
  },
  {
    title: "GT911 lcd a",
    icon: (
      <Svg>
        <circle cx="8" cy="8" r="8" fill="#fff" />
        <circle cx="8" cy="8" r="6.800" fill="#de5833" />
        <path d="M6.500 14 5 6q.5-3.500 3.500-3Q11.500 4 11 8l-1 2 1 4Z" fill="#fff" />
        <path d="M8.500 8.200 12 7.800v1.700L8.500 10Z" fill="#fdb813" />
        <circle cx="8.800" cy="5.800" r=".7" fill="#2d4f8e" />
      </Svg>
    ),
  },
  {
    title: "Nscreen32",
    icon: (
      <Svg>
        <rect x="2.500" y="1.500" width="11" height="13" stroke="#393d39" />
        <path d="M5.500 12V4l5 8V4" stroke="#393d39" />
        <path d="M0 5h2M0 8h2M0 11h2M14 5h2M14 8h2M14 11h2" stroke="#393d39" />
      </Svg>
    ),
  },
  {
    title: "Lua EOS –",
    icon: (
      <Svg>
        <path d="m1 4 3.500 8L8 4M9.500 4v7.500h5" stroke="#2b566c" strokeWidth="2" />
      </Svg>
    ),
  },
  { title: "Lua EOS up", icon: <Rumble /> },
  { title: "Nscreen_3", icon: <Icon name="mark" color="#303530" /> },
  { title: "mvarand", icon: <Icon name="mark" color="#1b1f23" />, active: true },
  {
    title: "Python 2.7",
    icon: (
      <Svg>
        <path d="M8 .5c-3 0-3.500 1-3.500 2.500V5H8v.7H3C1.200 5.700.5 7 .5 8.500S1.300 11.500 3 11.500h1.200V10c0-1.500 1-2.300 2.300-2.300h3c1.200 0 2-.8 2-2V3c0-1.500-1-2.500-3.500-2.500Z" fill="#3b77a8" />
        <path d="M8 15.500c3 0 3.500-1 3.500-2.500v-2H8v-.7h5c1.800 0 2.500-1.300 2.500-2.800S14.700 4.500 13 4.500h-1.200V6c0 1.500-1 2.300-2.300 2.300h-3c-1.200 0-2 .8-2 2V13c0 1.500 1 2.500 3.500 2.500Z" fill="#f6d343" />
      </Svg>
    ),
  },
  { title: "Unit Test Resul" },
];

const FolderGlyph = () => (
  <svg width="18" height="16" viewBox="0 0 18 16" fill="#c6c6c6" stroke="#7c7c7c" aria-hidden="true">
    <path d="M.5 14.500v-13h5.500l1.500 2h10v11Z" />
    <path d="M.5 5.500h17" />
  </svg>
);

const finderGlyphs: Record<string, React.ReactNode> = {
  home: (
    <Svg size={17}>
      <path d="M.5 8 8 1.200 15.500 8M12.500 2v3" stroke="currentColor" strokeWidth="1.600" />
      <path d="M2.500 7v8.500h11V7" stroke="currentColor" strokeWidth="1.200" />
      <path d="M6.500 6h3v3h-3zM6.500 11h3v4.500h-3z" fill="currentColor" />
    </Svg>
  ),
  apps: (
    <Svg size={17}>
      <path d="m9.300 1.500-5.500 9M6.800 1.500l6.800 12M0 10.800h9.500M12.500 10.800H16M2.500 12.800 1.500 14.500" stroke="currentColor" strokeWidth="2" />
    </Svg>
  ),
  movies: (
    <Svg size={17}>
      <path d="M.5.5h15v15H.5z" fill="#cfcfcf" stroke="currentColor" />
      <path d="M2.200 0v16M13.800 0v16" stroke="currentColor" strokeWidth="2" strokeDasharray="1.500 1" />
      <path d="M3.500 8h9" stroke="currentColor" />
    </Svg>
  ),
  camera: (
    <svg width="18" height="14" viewBox="0 0 18 14" fill="none" aria-hidden="true">
      <path d="M0 3h5l1.500-2.500h5L13 3h5v11H0z" fill="#858585" />
      <circle cx="9" cy="8" r="3.800" fill="#a8a8a8" stroke="#ececec" strokeWidth="1.200" />
    </svg>
  ),
  documents: (
    <Svg size={17}>
      <path d="M6.500.5H12L15.500 4v8.500h-9Z" fill="#989898" stroke="currentColor" />
      <path d="M.5 4.500H6L9.500 8v7.500h-9Z" fill="#dadada" stroke="currentColor" />
      <path d="M6 4.500V8h3.500M12 .5V4h3.500" stroke="currentColor" />
    </Svg>
  ),
  desktop: (
    <svg width="18" height="15" viewBox="0 0 18 15" fill="none" aria-hidden="true">
      <path d="M.5.5h17v14H.5z" fill="#c6c6c6" stroke="currentColor" />
      <path d="M1 3h16" stroke="currentColor" />
      <path d="M4 12.500h10" stroke="#fff" strokeWidth="2" strokeDasharray="1.500 1" />
    </svg>
  ),
  downloads: (
    <Svg size={18}>
      <circle cx="8" cy="8" r="8" fill="#6d6d6d" />
      <path d="M6.300 3.200h3.400v4.300H12L8 12.300 4 7.500h2.300Z" fill="#fff" />
    </Svg>
  ),
  disk: (
    <Svg size={18}>
      <path d="M2 .5h12l1 11v4H1v-4Z" fill="#d6d6d6" stroke="currentColor" />
      <path d="M1 12h14v3.500H1z" fill="#858585" />
      <circle cx="8" cy="6" r="3.500" stroke="#999" />
      <circle cx="8" cy="6" r="1" fill="#999" />
    </Svg>
  ),
};

const finderSections: { title: string; items: { label: string; glyph?: string; color?: string }[] }[] = [
  {
    title: "Favorites",
    items: [
      { label: "3dveena_git" },
      { label: "GoogleDriveBackup" },
      { label: "MEGA" },
      { label: "mvaranda", glyph: "home" },
      { label: "lixo" },
      { label: "Applications", glyph: "apps" },
      { label: "Movies", glyph: "movies" },
      { label: "Pictures", glyph: "camera" },
      { label: "Documents", glyph: "documents" },
      { label: "Desktop", glyph: "desktop" },
      { label: "Downloads", glyph: "downloads" },
      { label: "Lawyer" },
      { label: "lua-eos" },
    ],
  },
  { title: "Locations", items: [{ label: "MacOSX-SSD", glyph: "disk" }] },
  {
    title: "Tags",
    items: [
      { label: "Blue", color: "#3b7ff0" },
      { label: "Yellow", color: "#ecc944" },
      { label: "Red", color: "#ec3b4b" },
      { label: "Orange", color: "#ed9140" },
      { label: "Green", color: "#4fd35c" },
    ],
  },
];

const repoTabs: { label: string; icon: IconName; active?: boolean }[] = [
  { label: "Code", icon: "code", active: true },
  { label: "Issues", icon: "issue" },
  { label: "Pull requests", icon: "pull" },
  { label: "Actions", icon: "play" },
  { label: "Projects", icon: "project" },
  { label: "Wiki", icon: "book" },
  { label: "Security", icon: "shield" },
  { label: "Insights", icon: "graph" },
  { label: "Settings", icon: "gear" },
];

const files = [
  { name: "DEMO", folder: true },
  { name: "html_templates", folder: true },
  { name: "httpdir", folder: true },
  { name: "demo_test_reports.py" },
  { name: "demo_unittest.py" },
  { name: "emailsender.py" },
  { name: "runtests.py" },
];

const languages = [
  { name: "Python", share: 82.9, color: "#3a6f9f" },
  { name: "HTML", share: 11.8, color: "#d6341f" },
  { name: "CSS", share: 5.3, color: "#4b3170" },
];

/* ---------- sections ---------- */

const Terminal = () => (
  <TerminalWindow aria-label="Terminal">
    <TerminalTitle>
      <Dots>
        {[0, 1, 2].map((n) => (
          <Dot key={n} $color="#d6d6d6" />
        ))}
      </Dots>
      <TerminalName>
        <svg width="16" height="20" viewBox="0 0 16 20" fill="#bdbdbd" aria-hidden="true">
          <path d="M0 4h6l1.500 2H16v11H0Z" />
        </svg>
        test-hsd — -zsh — 105×30
      </TerminalName>
    </TerminalTitle>
    <TerminalTabs>
      <Svg size={12}>
        <path d="M8 1v14M1 8h14" stroke="currentColor" strokeWidth="1.300" />
      </Svg>
    </TerminalTabs>
    <TerminalBody>
      <Prompt>mvaranda@Mar</Prompt>
      <TerminalScroll>
        <svg width="13" height="14" viewBox="0 0 13 14" fill="none" stroke="currentColor" aria-hidden="true">
          <path d="M.5.5h12v13H.5zM3 4.500h8v5H3zM3 7h8" />
        </svg>
      </TerminalScroll>
    </TerminalBody>
  </TerminalWindow>
);

const Finder = () => (
  <FinderWindow aria-label="Finder">
    <FinderBar>
      <Dots>
        {[0, 1, 2].map((n) => (
          <Dot key={n} $color="#d6d6d6" />
        ))}
      </Dots>
      <FinderNav>
        <FinderNavButton aria-label="Back">
          <Svg size={14}>
            <path d="M10.500 2 4.500 8l6 6" stroke="currentColor" strokeWidth="1.600" />
          </Svg>
        </FinderNavButton>
        <FinderNavButton aria-label="Forward" $dim>
          <Svg size={14}>
            <path d="m5.500 2 6 6-6 6" stroke="currentColor" strokeWidth="1.600" />
          </Svg>
        </FinderNavButton>
      </FinderNav>
    </FinderBar>
    <FinderSidebar>
      {finderSections.map((section) => (
        <div key={section.title}>
          <FinderHeading>{section.title}</FinderHeading>
          <ul>
            {section.items.map((item) => (
              <FinderItem key={item.label}>
                <FinderIcon>
                  {item.color ? <Dot $color={item.color} /> : item.glyph ? finderGlyphs[item.glyph] : <FolderGlyph />}
                </FinderIcon>
                {item.label}
              </FinderItem>
            ))}
          </ul>
        </div>
      ))}
    </FinderSidebar>
    <FinderStatus />
  </FinderWindow>
);

const Chrome = () => (
  <>
    <TabStrip>
      <WindowControls>
        <Dot $color="#f0484d" />
        <Dot $color="#f5b32f" />
        <Dot $color="#33cf43" />
      </WindowControls>
      {tabs.map((tab) => (
        <Tab key={tab.title} $active={tab.active}>
          {tab.icon}
          <TabTitle>{tab.title}</TabTitle>
          {tab.active && (
            <Svg size={12}>
              <path d="m2 2 12 12M14 2 2 14" stroke="#3c3c40" strokeWidth="2" />
            </Svg>
          )}
        </Tab>
      ))}
      <NewTab aria-label="New tab">
        <Svg>
          <path d="M8 1.500v13M1.500 8h13" stroke="currentColor" strokeWidth="1.600" />
        </Svg>
      </NewTab>
    </TabStrip>
    <Toolbar>
      <ToolButton $round aria-label="Back">
        <Svg>
          <path d="M15 8H1.500M7.500 1.800 1.300 8l6.200 6.200" stroke="currentColor" strokeWidth="2" strokeLinecap="round" strokeLinejoin="round" />
        </Svg>
      </ToolButton>
      <ToolButton aria-label="Forward">
        <Svg>
          <path d="M1 8h13.500M8.500 1.800 14.700 8l-6.200 6.200" stroke="#b4b4b6" strokeWidth="1.800" strokeLinecap="round" strokeLinejoin="round" />
        </Svg>
      </ToolButton>
      <ToolButton aria-label="Reload">
        <Svg>
          <path d="M13.500 9.500A6 6 0 1 1 12.500 4" stroke="currentColor" strokeWidth="2" strokeLinecap="round" />
          <path d="M15.500 1v6.500H9Z" fill="currentColor" />
        </Svg>
      </ToolButton>
      <ToolButton aria-label="Home">
        <Svg>
          <path d="M1 8.300 8 1.300l7 7M3.200 7.500v7.300h9.600V7.500" stroke="currentColor" strokeWidth="2" strokeLinecap="round" strokeLinejoin="round" />
          <path d="M6.500 9h3v6h-3z" fill="currentColor" />
        </Svg>
      </ToolButton>
      <AddressBar>
        <AddressSlot $divided aria-label="Tracking protection">
          <Svg size={14}>
            <path d="M8 1 2 2.500V8q0 5 6 7.200Q14 13 14 8V2.500Z" stroke="currentColor" strokeWidth="1.700" strokeLinejoin="round" />
            <path d="M8 4.300v7.500Q5 10.500 5 8V5Z" fill="currentColor" />
          </Svg>
        </AddressSlot>
        <AddressSlot aria-label="Site information">
          <Svg size={15}>
            <path d="M4.500 8V5a3.500 3.500 0 0 1 7 0v3" stroke="currentColor" strokeWidth="2" />
            <rect x="1.500" y="7" width="13" height="8" rx="1.300" fill="currentColor" />
          </Svg>
        </AddressSlot>
        <AddressInput aria-label="Address" defaultValue="https://github.com/mvaranda/test-hsd" />
        <AddressSlot aria-label="Page actions">
          <Svg size={17}>
            <g fill="currentColor">
              <circle cx="2" cy="8" r="1.800" />
              <circle cx="8" cy="8" r="1.800" />
              <circle cx="14" cy="8" r="1.800" />
            </g>
          </Svg>
        </AddressSlot>
        <AddressSlot aria-label="Save to Pocket">
          <Svg>
            <path d="M1.200 2.200h13.600v5a6.800 6.800 0 0 1-13.600 0Z" stroke="currentColor" strokeWidth="1.700" strokeLinejoin="round" />
            <path d="m4.800 6.500 3.200 3 3.200-3" stroke="currentColor" strokeWidth="1.800" strokeLinecap="round" strokeLinejoin="round" />
          </Svg>
        </AddressSlot>
        <AddressSlot aria-label="Bookmark this page">
          <Icon name="star" />
        </AddressSlot>
      </AddressBar>
      <ToolButton aria-label="Bookmarks tray">
        <Svg>
          <path d="m8 1.500 1.500 3 3.200.4-2.300 2.300.6 3.200L8 8.900l-3 1.500.6-3.200-2.300-2.300 3.200-.4Z" stroke="currentColor" strokeWidth="1.500" />
          <path d="M1.500 11v3.500h13V11" stroke="currentColor" strokeWidth="1.800" />
        </Svg>
      </ToolButton>
      <ToolButton aria-label="Library">
        <Svg>
          <path d="M1.500 1.500v13M5 1.500v13M8.500 1.500v13M11 2l4 12.500" stroke="currentColor" strokeWidth="1.700" />
        </Svg>
      </ToolButton>
      <ToolButton aria-label="Reader extension">
        <Svg>
          <circle cx="8" cy="8" r="8" fill="#2fa24a" />
          <text x="8" y="11.500" textAnchor="middle" fontFamily="Inter" fontWeight="700" fontSize="9" fill="#fff">A</text>
        </Svg>
      </ToolButton>
      <ToolButton aria-label="Adblock Plus">
        <Svg>
          <path d="M5 0h6l5 5v6l-5 5H5l-5-5V5Z" fill="#c70d2c" />
          <text x="8" y="10.500" textAnchor="middle" fontFamily="Inter" fontWeight="700" fontSize="7" fill="#fff">ABP</text>
        </Svg>
        <Badge>5</Badge>
      </ToolButton>
      <ToolButton aria-label="Sidebars">
        <Svg>
          <rect x="1" y="2" width="14" height="12" rx="2" stroke="currentColor" strokeWidth="1.700" />
          <path d="M7.500 2v12M3 5.500h2.500M3 8h2.500M3 10.500h2.500" stroke="currentColor" strokeWidth="1.300" />
        </Svg>
      </ToolButton>
      <ToolButton aria-label="Color picker">
        <Svg>
          <circle cx="12.500" cy="4.500" r="3" fill="#f3cf4b" />
          <circle cx="4.500" cy="7" r="4.300" fill="#9c1c24" />
          <circle cx="3.800" cy="5.500" r="1.300" fill="#f09a9a" />
          <circle cx="10.500" cy="10" r="4.500" fill="#1e3272" />
          <circle cx="9.500" cy="8.500" r="1.300" fill="#a9bdf0" />
        </Svg>
      </ToolButton>
      <ToolButton aria-label="Cookies">
        <Svg>
          <path d="M12 1.500A7.500 7.500 0 1 0 14.500 12L11 10l2-2.500-2.500-2Z" fill="#b8704a" />
          <path d="M5 4.500h1.800M3 8h1.800M7 7.500h1.500M6 11.500h1.800M10 13h1.200" stroke="#5c2c17" strokeWidth="1.600" />
          <circle cx="14" cy="5" r="1" fill="#b8704a" />
          <circle cx="14.500" cy="8.500" r=".8" fill="#8a4a2c" />
        </Svg>
      </ToolButton>
      <ToolButton aria-label="Account">
        <Svg>
          <circle cx="8" cy="8" r="8" fill="#45454a" />
          <text x="8" y="11.500" textAnchor="middle" fontFamily="Inter" fontWeight="700" fontSize="9" fill="#fff">M</text>
        </Svg>
      </ToolButton>
      <Divider />
      <ToolButton aria-label="Menu">
        <Svg>
          <path d="M2 3.500h6M2 8.500h12M2 13.500h12" stroke="currentColor" strokeWidth="1.800" />
        </Svg>
        <UpdateBadge>
          <Svg size={12}>
            <circle cx="8" cy="8" r="8" fill="#57c22d" />
            <path d="M8 13V4M4 8l4-4 4 4" stroke="#fff" strokeWidth="1.800" />
          </Svg>
        </UpdateBadge>
      </ToolButton>
    </Toolbar>
    <BookmarkBar aria-label="Bookmarks">
      <BookmarkList>
        {bookmarks.map((b) => (
          <li key={b.label}>
            <Bookmark href="#">
              {b.icon}
              {b.label}
            </Bookmark>
          </li>
        ))}
      </BookmarkList>
      <BookmarkTail>
        <Svg>
          <path d="m2 2.500 5.500 5.500L2 13.500M8.500 2.500 14 8l-5.500 5.500" stroke="#3f3f43" strokeWidth="1.800" />
        </Svg>
        <Bookmark href="#">
          <Svg>
            <path d="M.7 13.800V2.200h5.200l1.300 1.900h8.100v9.700Z" fill="#d2d2d4" stroke="#58585c" strokeWidth="1.200" />
            <path d="M.7 6h14.600" stroke="#58585c" />
          </Svg>
          Other Bookmarks
        </Bookmark>
      </BookmarkTail>
    </BookmarkBar>
  </>
);

const Header = () => (
  <SiteHeader>
    <a href="#" aria-label="Homepage">
      <Icon name="mark" size={32} />
    </a>
    <SearchBox>
      <SearchInput placeholder="Search or jump to…" aria-label="Search or jump to" />
      <SlashKey>/</SlashKey>
    </SearchBox>
    <SiteNav>
      {["Pull requests", "Issues", "Marketplace", "Explore"].map((label) => (
        <a key={label} href="#">
          {label}
        </a>
      ))}
    </SiteNav>
    <HeaderActions>
      <HeaderButton aria-label="Notifications">
        <Icon name="bell" />
      </HeaderButton>
      <HeaderButton aria-label="Create new">
        <Icon name="plus" />
        <Caret />
      </HeaderButton>
      <HeaderButton aria-label="Account menu">
        <svg width="20" height="20" viewBox="0 0 20 20" aria-hidden="true">
          <circle cx="10" cy="10" r="9.500" fill="#140a0a" />
          <path d="M13 4q6 3 3.500 8-3 6-9 5 6-3 5.500-13Z" fill="#8d1616" />
          <ellipse cx="9" cy="8.500" rx="3" ry="4.500" fill="#a08c70" />
        </svg>
        <Caret />
      </HeaderButton>
    </HeaderActions>
  </SiteHeader>
);

const RepoHeader = () => (
  <RepoHead>
    <RepoTop>
      <RepoTitle>
        <Icon name="repo" />
        <RepoPath>
          <RepoLink href="#">mvaranda</RepoLink>
          <span>/</span>
          <RepoLink href="#" $strong>
            test-hsd
          </RepoLink>
        </RepoPath>
      </RepoTitle>
      <RepoActions>
        <SplitButton>
          <SplitMain>
            <Icon name="eye" />
            Unwatch
            <Caret />
          </SplitMain>
          <SplitCount href="#">1</SplitCount>
        </SplitButton>
        <SplitButton>
          <SplitMain>
            <Icon name="star" />
            Star
          </SplitMain>
          <SplitCount href="#">0</SplitCount>
        </SplitButton>
        <SplitButton>
          <SplitMain>
            <Icon name="fork" />
            Fork
          </SplitMain>
          <SplitCount href="#">0</SplitCount>
        </SplitButton>
      </RepoActions>
    </RepoTop>
    <RepoTabs>
      {repoTabs.map((tab) => (
        <RepoTab key={tab.label} href="#" $active={tab.active}>
          <Icon name={tab.icon} />
          {tab.label}
        </RepoTab>
      ))}
    </RepoTabs>
  </RepoHead>
);

const FileList = () => (
  <FileBox>
    <CommitBar>
      <CommitMessage>
        <strong>mvaranda</strong> first commit for test framework
      </CommitMessage>
      <Sha href="#">7399e19</Sha>
      <CommitTime>27 minutes ago</CommitTime>
      <CountLink href="#">
        <Icon name="history" />
        <strong>1</strong> commit
      </CountLink>
    </CommitBar>
    <FileTable>
      <tbody>
        {files.map((file, i) => (
          <FileRow key={file.name} $hover={i === 0}>
            <FileCell $kind="icon">
              <Icon name={file.folder ? "directory" : "file"} color={file.folder ? "#73adf7" : "#959da5"} />
              {i === 0 && (
                <Pointer>
                  <svg width="12" height="18" viewBox="0 0 12 18" aria-hidden="true">
                    <path d="M1 1v13.500l3.200-3 2.100 5 2.200-1-2.100-4.700H11Z" fill="#000" stroke="#fff" />
                  </svg>
                </Pointer>
              )}
            </FileCell>
            <FileCell $kind="name">
              <a href="#">{file.name}</a>
            </FileCell>
            <FileCell $kind="message">first commit for test framework</FileCell>
            <FileCell $kind="time">27 minutes ago</FileCell>
          </FileRow>
        ))}
      </tbody>
    </FileTable>
  </FileBox>
);

const Sidebar = () => (
  <Aside>
    <AsideBlock>
      <AsideHeading>
        About
        <Icon name="gear" color="#586069" />
      </AsideHeading>
      <About>A test framework bases on Python</About>
    </AsideBlock>
    <AsideBlock>
      <AsideHeading>Releases</AsideHeading>
      <p>No releases published</p>
      <AsideLink href="#">Create a new release</AsideLink>
    </AsideBlock>
    <AsideBlock>
      <AsideHeading>Packages</AsideHeading>
      <p>No packages published</p>
      <AsideLink href="#">Publish your first package</AsideLink>
    </AsideBlock>
    <AsideBlock $last>
      <AsideHeading>Languages</AsideHeading>
      <LanguageBar>
        {languages.map((l) => (
          <LanguageShare key={l.name} $color={l.color} style={{ width: `${l.share}%` }} />
        ))}
      </LanguageBar>
      <LanguageList>
        {languages.map((l) => (
          <Language key={l.name} $color={l.color}>
            <strong>{l.name}</strong> {l.share}%
          </Language>
        ))}
      </LanguageList>
    </AsideBlock>
  </Aside>
);

const Footer = () => (
  <SiteFooter>
    <FooterList>
      <li>© 2021 GitHub, Inc.</li>
      {["Terms", "Privacy", "Security", "Status", "Docs"].map((label) => (
        <li key={label}>
          <FooterLink href="#">{label}</FooterLink>
        </li>
      ))}
    </FooterList>
    <Icon name="mark" size={24} color="#c9cdd2" />
    <FooterList>
      {["Contact GitHub", "Pricing", "API", "Training", "Blog", "About"].map((label) => (
        <li key={label}>
          <FooterLink href="#">{label}</FooterLink>
        </li>
      ))}
    </FooterList>
  </SiteFooter>
);

export default function App() {
  return (
    <Desktop>
      <GlobalStyle />
      <Terminal />
      <Finder />
      <BrowserWindow aria-label="Browser">
        <Chrome />
        <Viewport>
          <Page>
            <Header />
            <RepoHeader />
            <Columns>
              <MainColumn>
                <FileBar>
                  <Button>
                    <Icon name="branch" color="#6a737d" />
                    master
                    <Caret />
                  </Button>
                  <Counts>
                    <CountLink href="#">
                      <Icon name="branch" />
                      <strong>1</strong> branch
                    </CountLink>
                    <CountLink href="#">
                      <Icon name="tag" />
                      <strong>0</strong> tags
                    </CountLink>
                  </Counts>
                  <Button>Go to file</Button>
                  <Button $tight>
                    Add file
                    <Caret />
                  </Button>
                  <Button $primary>
                    <Icon name="download" />
                    Code
                    <Caret />
                  </Button>
                </FileBar>
                <FileList />
                <ReadmeNotice>
                  <p>Help people interested in this repository understand your project by adding a README.</p>
                  <Button $primary $small>
                    Add a README
                  </Button>
                </ReadmeNotice>
              </MainColumn>
              <Sidebar />
            </Columns>
            <Footer />
          </Page>
          <ScrollTrack>
            <ScrollThumb />
          </ScrollTrack>
        </Viewport>
      </BrowserWindow>
    </Desktop>
  );
}
